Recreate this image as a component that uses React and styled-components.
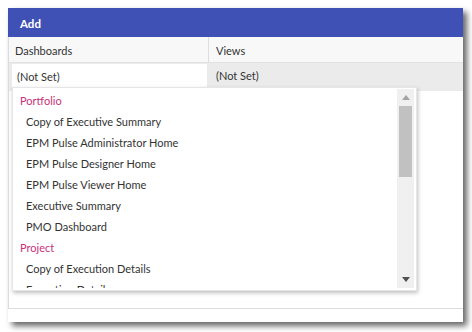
import React from "react";
import styled, { createGlobalStyle } from "styled-components";

const Global = createGlobalStyle`
  html, body { margin: 0; padding: 0; background: #ffffff; }
  body { font-family: "Lato", "Open Sans", sans-serif; }
`;

const Page = styled.div`
  padding: 8px 0 0 8px;
  width: 472px;
  height: 332px;
  box-sizing: border-box;
`;

const Window = styled.div`
  width: 455px;
  height: 314px;
  background: #fff;
  box-shadow: 4px 4px 6px rgba(0, 0, 0, 0.6);
  display: flex;
  flex-direction: column;
`;

const TitleBar = styled.div`
  height: 29px;
  background: #3f51b5;
  color: #fff;
  font-weight: 700;
  font-size: 11.5px;
  display: flex;
  align-items: center;
  padding: 1px 0 0 12px;
  box-sizing: border-box;
`;

const Panel = styled.div`
  height: 271px;
  border-left: 1px solid #dcdcdc;
  border-bottom: 1px solid #dcdcdc;
  position: relative;
  display: flex;
  flex-direction: column;
`;

const Row = styled.div`
  display: grid;
  grid-template-columns: 200px 1fr;
  height: ${(p) => p.$h}px;
  background: ${(p) => p.$bg};
  border-bottom: ${(p) => (p.$line ? "1px solid #e2e2e2" : "none")};
`;

const Cell = styled.div`
  display: flex;
  align-items: ${(p) => (p.$top ? "flex-start" : "center")};
  padding-left: ${(p) => p.$pl ?? 6}px;
  padding-top: ${(p) => p.$pt ?? 0}px;
  font-size: 11px;
  color: #333;
  border-right: ${(p) => (p.$divider ? "1px solid #dedede" : "none")};
`;

const InputBox = styled.div`
  margin: 1px 2px 0 3px;
  height: 24px;
  flex: 1;
  background: #fff;
  display: flex;
  align-items: center;
  padding-left: 5px;
  font-size: 11px;
  color: #333;
`;

const Dropdown = styled.div`
  position: absolute;
  left: 3px;
  top: 50px;
  width: 405px;
  height: 204px;
  background: #fff;
  border: 1px solid #e6e6e6;
  box-shadow: 1px 2px 4px rgba(0, 0, 0, 0.25);
  display: flex;
  padding: 0 2px 2px 0;
  box-sizing: border-box;
  z-index: 2;
`;

const List = styled.div`
  flex: 1;
  overflow: hidden;
  padding-top: 2px;
`;

const Item = styled.div`
  height: 21px;
  display: flex;
  align-items: center;
  padding-left: ${(p) => (p.$group ? 7 : 13)}px;
  font-size: 11px;
  color: ${(p) => (p.$group ? "#c8317a" : "#333")};
  white-space: nowrap;
`;

const Scrollbar = styled.div`
  width: 17px;
  background: #f0f0f0;
  display: flex;
  flex-direction: column;
  align-items: center;
  margin-top: 1px;
`;

const Arrow = styled.div`
  height: 17px;
  width: 100%;
  display: flex;
  align-items: center;
  justify-content: center;
`;

const Thumb = styled.div`
  width: 13px;
  height: 71px;
  background: #c1c1c1;
`;

const Spacer = styled.div`
  flex: 1;
`;

const Tri = ({ up, color }) => (
  <svg width="8" height="5" viewBox="0 0 8 5">
    <path d={up ? "M0 5 L4 0 L8 5 Z" : "M0 0 L8 0 L4 5 Z"} fill={color} />
  </svg>
);

const items = [
  { t: "Portfolio", g: true },
  { t: "Copy of Executive Summary" },
  { t: "EPM Pulse Administrator Home" },
  { t: "EPM Pulse Designer Home" },
  { t: "EPM Pulse Viewer Home" },
  { t: "Executive Summary" },
  { t: "PMO Dashboard" },
  { t: "Project", g: true },
  { t: "Copy of Execution Details" },
  { t: "Execution Details" },
];

export default function App() {
  return (
    <>
      <Global />
      <Page>
        <Window>
          <TitleBar>Add</TitleBar>
          <Panel>
            <Row $h={25} $bg="#f8f8f8" $line>
              <Cell $divider $pt={2}>Dashboards</Cell>
              <Cell $pl={7} $pt={2}>Views</Cell>
            </Row>
            <Row $h={28} $bg="#ebebeb">
              <Cell $pl={0} $top>
                <InputBox>(Not Set)</InputBox>
              </Cell>
              <Cell $pl={7} $top $pt={6}>
                (Not Set)
              </Cell>
            </Row>
            <Dropdown>
              <List>
                {items.map((it) => (
                  <Item key={it.t} $group={it.g}>
                    {it.t}
                  </Item>
                ))}
              </List>
              <Scrollbar>
                <Arrow>
                  <Tri up color="#a3a3a3" />
                </Arrow>
                <Thumb />
                <Spacer />
                <Arrow>
                  <Tri color="#505050" />
                </Arrow>
              </Scrollbar>
            </Dropdown>
          </Panel>
        </Window>
      </Page>
    </>
  );
}
